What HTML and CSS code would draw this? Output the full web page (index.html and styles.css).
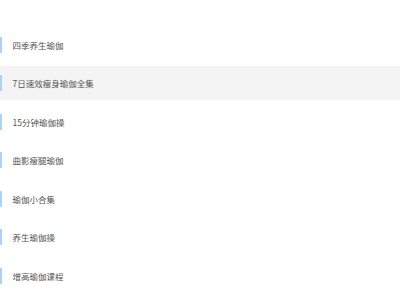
FILE: index.html
```html
<!DOCTYPE html>
<html lang="zh">
<head>
  <meta charset="UTF-8">
  <meta name="viewport" content="width=device-width, initial-scale=1.0">
  <title>瑜伽课程</title>
  <link rel="stylesheet" href="styles.css">
</head>
<body>
  <ul class="course-list">
    <li class="course-item">四季养生瑜伽</li>
    <li class="course-item active">7日速效瘦身瑜伽全集</li>
    <li class="course-item">15分钟瑜伽操</li>
    <li class="course-item">曲影瘦腿瑜伽</li>
    <li class="course-item">瑜伽小合集</li>
    <li class="course-item">养生瑜伽操</li>
    <li class="course-item">增高瑜伽课程</li>
  </ul>
</body>
</html>
```

FILE: styles.css
```css
body {
  margin: 0;
  background-color: #fff;
  font-family: "Noto Sans CJK SC", "Noto Sans", sans-serif;
}
.course-list {
  list-style-type: none;
  margin: 0;
  padding: 27.5px 0 0;
}
.course-item {
  position: relative;
  height: 34px;
  line-height: 34px;
  margin-bottom: 4.5px;
  padding-left: 12.5px;
  font-size: 8.5px;
  color: #555;
}
.course-item::before {
  content: "";
  position: absolute;
  left: 0;
  top: 9px;
  width: 2px;
  height: 16px;
  background-color: #a9d3ff;
}
.course-item.active {
  background-color: #f4f4f4;
}
```
